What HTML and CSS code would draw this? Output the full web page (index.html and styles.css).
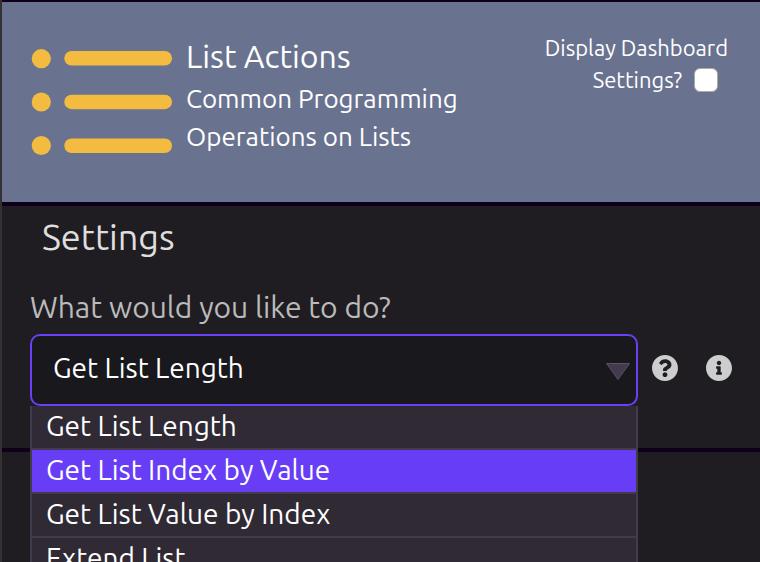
FILE: index.html
```html
<!DOCTYPE html>
<html lang="en">
<head>
<meta charset="utf-8">
<meta name="viewport" content="width=device-width, initial-scale=1">
<title>List Actions</title>
<link rel="stylesheet" href="styles.css">
</head>
<body>
<header class="banner">
  <svg class="banner-icon" viewBox="0 0 142 108" aria-hidden="true">
    <circle cx="10.300" cy="10.700" r="9.600"/><rect x="33.300" y="3" width="107.700" height="14.500" rx="7.250"/>
    <circle cx="10.300" cy="54" r="9.600"/><rect x="33.300" y="46.700" width="107.700" height="14.500" rx="7.250"/>
    <circle cx="10.300" cy="97.500" r="9.600"/><rect x="33.300" y="90.500" width="107.700" height="14.500" rx="7.250"/>
  </svg>
  <div class="banner-text">
    <h1>List Actions</h1>
    <p>Common Programming Operations on Lists</p>
  </div>
  <div class="dashboard-toggle">
    <label for="dashboard">Display Dashboard Settings?</label><input type="checkbox" id="dashboard">
  </div>
</header>
<main class="settings">
  <h2>Settings</h2>
  <label class="question" for="action">What would you like to do?</label>
  <div class="field">
    <div class="picker">
      <select id="action">
        <option>Get List Length</option>
        <option>Get List Index by Value</option>
        <option>Get List Value by Index</option>
        <option>Extend List</option>
      </select>
      <svg class="arrow" viewBox="0 0 24 17" aria-hidden="true"><path d="M.5.5h23L12 16.500z"/></svg>
      <ul class="menu" role="listbox" aria-label="Actions">
        <li role="option" aria-selected="false">Get List Length</li>
        <li role="option" aria-selected="true">Get List Index by Value</li>
        <li role="option" aria-selected="false">Get List Value by Index</li>
        <li role="option" aria-selected="false">Extend List</li>
      </ul>
    </div>
    <button class="icon-button" type="button" aria-label="Help">
      <svg viewBox="8 8 496 496" aria-hidden="true"><path d="M504 256c0 136.997-111.043 248-248 248S8 392.997 8 256C8 119.083 119.043 8 256 8s248 111.083 248 248zM262.655 90c-54.497 0-89.255 22.957-116.549 63.758-3.536 5.286-2.353 12.415 2.715 16.258l34.699 26.310c5.205 3.947 12.621 3.008 16.665-2.122 17.864-22.658 30.113-35.797 57.303-35.797 20.429 0 45.698 13.148 45.698 32.958 0 14.976-12.363 22.667-32.534 33.976C247.128 238.528 216 254.941 216 296v4c0 6.627 5.373 12 12 12h56c6.627 0 12-5.373 12-12v-1.333c0-28.462 83.186-29.647 83.186-106.667 0-58.002-60.165-102-116.531-102zM256 338c-25.365 0-46 20.635-46 46 0 25.364 20.635 46 46 46s46-20.636 46-46c0-25.365-20.635-46-46-46z"/></svg>
    </button>
    <button class="icon-button" type="button" aria-label="Information">
      <svg viewBox="8 8 496 496" aria-hidden="true"><path d="M256 8C119.043 8 8 119.083 8 256c0 136.997 111.043 248 248 248s248-111.003 248-248C504 119.083 392.957 8 256 8zm0 110c23.196 0 42 18.804 42 42s-18.804 42-42 42-42-18.804-42-42 18.804-42 42-42zm56 254c0 6.627-5.373 12-12 12h-88c-6.627 0-12-5.373-12-12v-24c0-6.627 5.373-12 12-12h12v-64h-12c-6.627 0-12-5.373-12-12v-24c0-6.627 5.373-12 12-12h64c6.627 0 12 5.373 12 12v100h12c6.627 0 12 5.373 12 12v24z"/></svg>
    </button>
  </div>
</main>
</body>
</html>
```
FILE: styles.css
```css
* {
  box-sizing: border-box;
}

body {
  margin: 0;
  height: 100vh;
  overflow: hidden;
  background: #1f1d22;
  border-left: 2px solid #333133;
  color: #fff;
  font-family: Ubuntu, "Noto Sans", sans-serif;
}

h1,
h2,
p,
ul {
  margin: 0;
  padding: 0;
  font-weight: 400;
}

.banner {
  display: flex;
  align-items: flex-start;
  gap: 13px;
  padding: 32px 32px 46px 29px;
  background: #69728f;
  border-top: 2px solid #0e001a;
  border-bottom: 4px solid #0e001a;
}

.banner-icon {
  flex: none;
  width: 142px;
  margin-top: 14px;
  fill: #f4bb41;
}

.banner-text {
  flex: 1;
}

h1 {
  font-size: 32px;
  line-height: 44px;
}

.banner-text p {
  max-width: 300px;
  margin-top: 2px;
  font-size: 26px;
  line-height: 38px;
}

.dashboard-toggle {
  flex: none;
  width: 200px;
  margin-top: -2px;
  font-size: 22px;
  line-height: 32px;
  text-align: right;
}

.dashboard-toggle input {
  appearance: none;
  width: 24px;
  height: 24px;
  margin: 0 10px 4px 12px;
  vertical-align: middle;
  background: #fff;
  border: 1px solid #aaa;
  border-radius: 6px;
}

.settings {
  padding: 6px 28px 42px;
  border-bottom: 4px solid #0e001a;
}

h2 {
  padding-left: 12px;
  color: #dedede;
  font-size: 36px;
  line-height: 50px;
}

.question {
  display: block;
  margin-top: 25px;
  color: #bababa;
  font-size: 30px;
  line-height: 40px;
}

.field {
  display: flex;
  align-items: center;
  margin-top: 7px;
}

.picker {
  position: relative;
  flex: 1;
}

.picker select {
  appearance: none;
  display: block;
  width: 100%;
  height: 72px;
  padding: 0 48px 6px 21px;
  background: #19181c;
  border: 2px solid #693ff7;
  border-radius: 10px;
  color: #fff;
  font: inherit;
  font-size: 28px;
}

.arrow {
  position: absolute;
  top: 29px;
  right: 8px;
  width: 24px;
  fill: #443a4e;
  stroke: #5b5263;
}

.menu {
  position: absolute;
  top: 100%;
  left: 0;
  right: 0;
  list-style: none;
  background: #302a35;
  border: 2px solid #433a4b;
  border-top: 0;
  font-size: 28px;
  line-height: 40px;
}

.menu li {
  padding: 0 14px 2px;
  border-bottom: 2px solid #433a4b;
}

.menu [aria-selected="true"] {
  background: #673df6;
}

.icon-button {
  flex: none;
  width: 26px;
  height: 26px;
  margin: 0 0 4px 14px;
  padding: 0;
  background: none;
  border: 0;
}

.icon-button + .icon-button {
  margin-left: 28px;
}

.icon-button svg {
  display: block;
  width: 100%;
  fill: #cdcdcd;
}
```
